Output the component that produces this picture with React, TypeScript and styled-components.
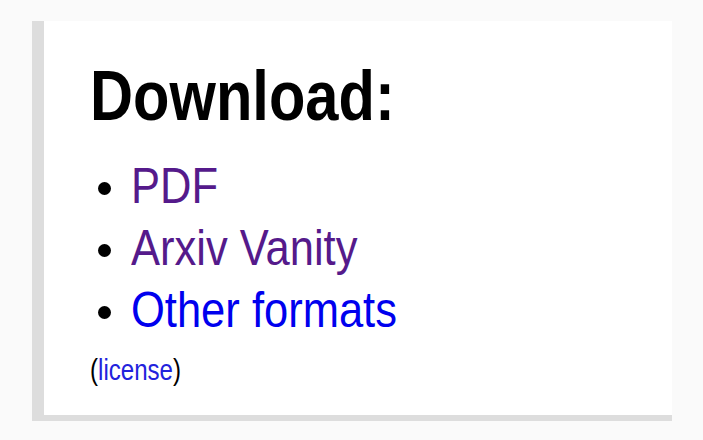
import React from "react";
import styled, { createGlobalStyle } from "styled-components";

const GlobalStyle = createGlobalStyle`
  html, body {
    margin: 0;
    padding: 0;
    background: #fafafa;
  }
  body {
    font-family: "Liberation Sans", Arial, sans-serif;
  }
`;

const Page = styled.div`
  padding: 21px 0 0 32px;
  width: 703px;
  height: 440px;
  box-sizing: border-box;
`;

const Panel = styled.section`
  width: 640px;
  box-sizing: border-box;
  background: #ffffff;
  border-left: 12px solid #dddddd;
  border-bottom: 6px solid #dddddd;
  padding: 39px 0 28px 46px;
  font-family: "Liberation Sans", Arial, sans-serif;
`;

/* The text in the reference is set in a condensed face; squeeze it horizontally. */
const Narrow = styled.span<{ $sx: number }>`
  display: inline-block;
  white-space: nowrap;
  transform: scaleX(${(p) => p.$sx});
  transform-origin: left center;
`;

const Heading = styled.h2`
  margin: 0;
  font-size: 71px;
  line-height: 72px;
  font-weight: 700;
  color: #000;
`;

const List = styled.ul`
  list-style: none;
  margin: 23px 0 0 0;
  padding: 0;
`;

const Item = styled.li`
  display: flex;
  align-items: center;
  height: 62px;
  font-size: 50px;
  line-height: 62px;

  &::before {
    content: "";
    flex: none;
    width: 13px;
    height: 13px;
    border-radius: 50%;
    background: #000;
    margin: 4px 20px 0 8px;
  }
`;

const Link = styled.a<{ $visited?: boolean }>`
  color: ${(p) => (p.$visited ? "#551a8b" : "#0000ee")};
  text-decoration: none;
`;

const License = styled.div`
  margin-top: 12px;
  font-size: 29px;
  line-height: 34px;
  color: #000;
`;

const LicenseLink = styled.a`
  color: #2222dd;
  text-decoration: none;
`;

export default function App() {
  return (
    <>
      <GlobalStyle />
      <Page>
        <Panel>
          <Heading>
            <Narrow $sx={0.84}>Download:</Narrow>
          </Heading>
          <List>
            <Item>
              <Narrow $sx={0.87}>
                <Link href="#" $visited>PDF</Link>
              </Narrow>
            </Item>
            <Item>
              <Narrow $sx={0.87}>
                <Link href="#" $visited>Arxiv Vanity</Link>
              </Narrow>
            </Item>
            <Item>
              <Narrow $sx={0.87}>
                <Link href="#">Other formats</Link>
              </Narrow>
            </Item>
          </List>
          <License>
            <Narrow $sx={0.83}>
              (<LicenseLink href="#">license</LicenseLink>)
            </Narrow>
          </License>
        </Panel>
      </Page>
    </>
  );
}
